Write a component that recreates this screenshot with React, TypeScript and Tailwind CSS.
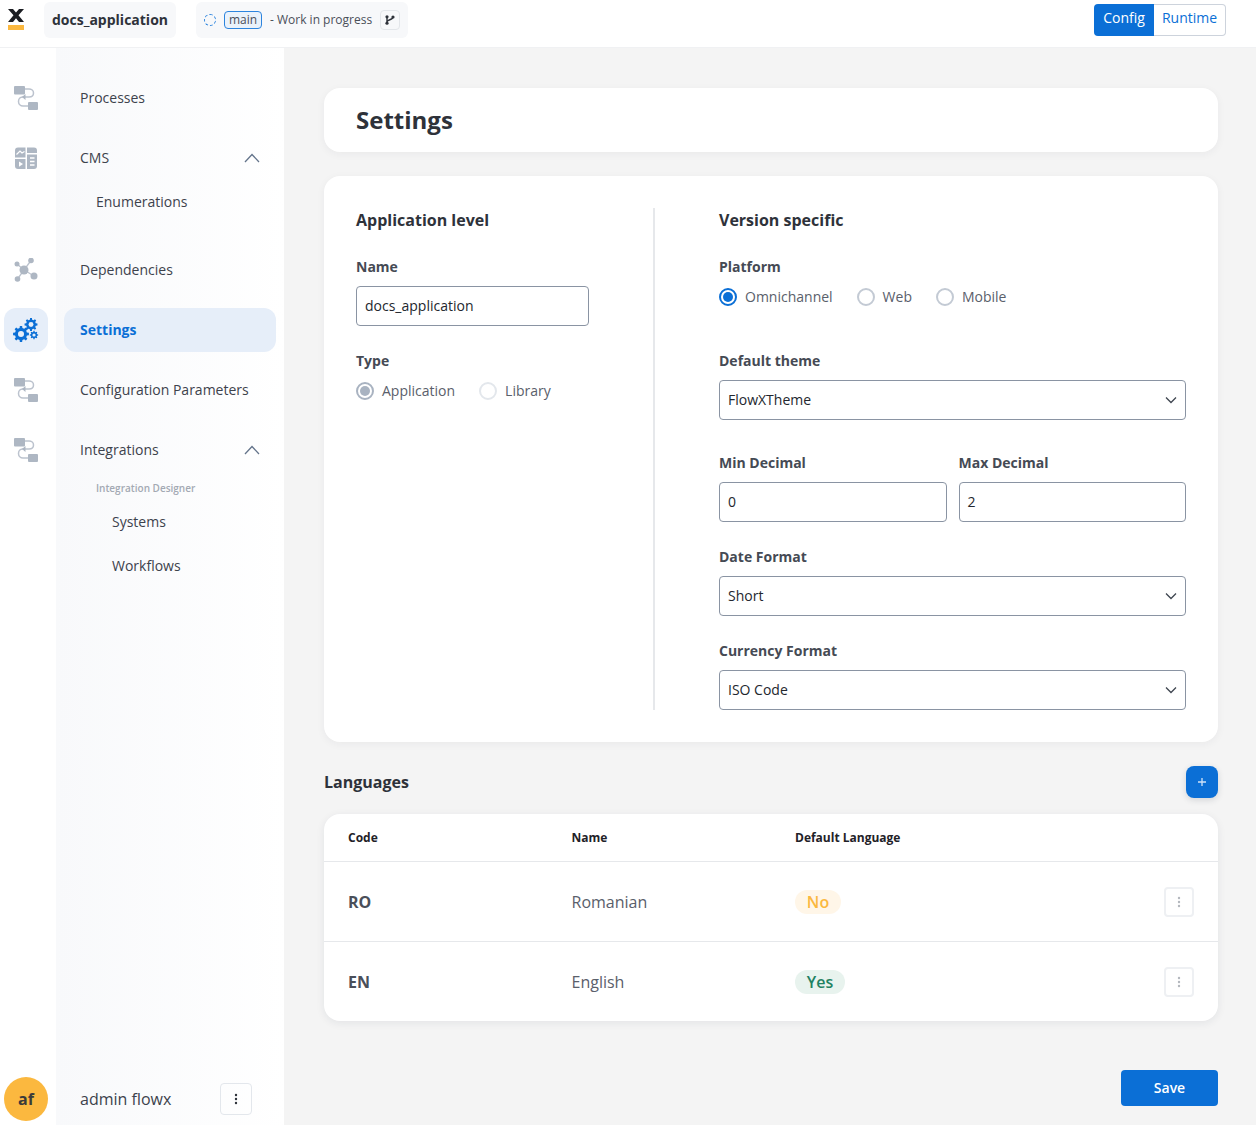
import React from "react";

const FlowIcon = () => (
  <svg width="24" height="24" viewBox="0 0 24 24" fill="none">
    <rect x="0" y="0" width="11" height="8.500" rx="1" fill="#aeb7c3" />
    <rect x="14" y="16" width="10" height="8" rx="1" fill="#aeb7c3" />
    <path d="M11 3H15C17.500 3 19.500 4.800 19.500 7C19.500 9.500 17.500 11 15 11H8.500C6.200 11 4.500 13 4.500 15.500C4.500 18 6.500 20 9 20H14" stroke="#bcc3ce" strokeWidth="1.500" />
    <path d="M8 11L11.500 8V14Z" fill="#aeb7c3" />
  </svg>
);

const CmsIcon = () => (
  <svg width="22" height="22" viewBox="0 0 22 22" fill="none">
    <path d="M0 3.500a3 3 0 0 1 3-3H10.500V10.500H0Z" fill="#aeb7c3" />
    <path d="M12 .5H19A3 3 0 0 1 22 3.500V6H12Z" fill="#aeb7c3" />
    <path d="M0 12H10.500V22H3A3 3 0 0 1 0 19Z" fill="#aeb7c3" />
    <path d="M12 7.500H22V19A3 3 0 0 1 19 22H12Z" fill="#aeb7c3" />
    <path d="M1.500 7.500L5 4L7 6L9.500 4.500" stroke="#fff" strokeWidth="1.200" />
    <path d="M4 14.500L8 17L4 19.800Z" fill="#fff" />
    <path d="M15 11H19.500M15 14.500H19.500M15 18H19.500" stroke="#fff" strokeWidth="1.500" />
  </svg>
);

const DepIcon = () => (
  <svg width="24" height="24" viewBox="0 0 24 24" fill="none">
    <path d="M3 6L10 12M17 2.500L10 12M20 18L10 12M3.500 21L10 12" stroke="#bcc3ce" strokeWidth="1.300" />
    <circle cx="10" cy="12" r="4.500" fill="#aeb7c3" />
    <circle cx="3" cy="6" r="2.500" fill="#aeb7c3" />
    <circle cx="17" cy="2.500" r="2.800" fill="#aeb7c3" />
    <circle cx="20" cy="18" r="3.500" fill="#aeb7c3" />
    <circle cx="3.500" cy="21" r="2.800" fill="#aeb7c3" />
  </svg>
);

function gearPath(cx: number, cy: number, r: number) {
  const teeth = 8;
  const inner = r * 0.76;
  const pts: string[] = [];
  for (let i = 0; i < teeth; i++) {
    const a = (i / teeth) * Math.PI * 2;
    const step = (Math.PI * 2) / teeth;
    [[-0.3, inner], [-0.18, r], [0.18, r], [0.3, inner]].forEach(([f, rad]) => {
      const t = a + f * step;
      pts.push(`${(cx + Math.cos(t) * rad).toFixed(2)} ${(cy + Math.sin(t) * rad).toFixed(2)}`);
    });
  }
  return `M${pts.join("L")}Z`;
}

const Gear = ({ cx, cy, r }: { cx: number; cy: number; r: number }) => (
  <g>
    <path d={gearPath(cx, cy, r)} fill="#0b6fd6" />
    <circle cx={cx} cy={cy} r={r * 0.38} fill="#e6eef9" />
  </g>
);

const GearsIcon = () => (
  <svg width="26" height="24" viewBox="0 0 26 24" fill="none">
    <Gear cx={8} cy={16} r={8} />
    <Gear cx={18} cy={6.500} r={6.500} />
    <Gear cx={21} cy={17} r={4.200} />
  </svg>
);

const Chevron = () => (
  <svg width="16" height="10" viewBox="0 0 16 10" fill="none">
    <path d="M1 9L8 1.500L15 9" stroke="#64748b" strokeWidth="1.300" />
  </svg>
);

const Down = () => (
  <svg width="12" height="8" viewBox="0 0 12 8" fill="none">
    <path d="M1 1.500L6 6.500L11 1.500" stroke="#3f4650" strokeWidth="1.300" />
  </svg>
);

const Kebab = ({ color }: { color: string }) => (
  <svg width="4" height="12" viewBox="0 0 4 12">
    <circle cx="2" cy="2" r="1.200" fill={color} />
    <circle cx="2" cy="6" r="1.200" fill={color} />
    <circle cx="2" cy="10" r="1.200" fill={color} />
  </svg>
);

const Rail = ({ active, children, className = "" }: { active?: boolean; children: React.ReactNode; className?: string }) => (
  <div className={`w-11 h-11 rounded-xl flex items-center justify-center ${active ? "bg-[#e6eef9]" : ""} ${className}`}>{children}</div>
);

const NavItem = ({ label, indent = "pl-4", chevron, active, className = "" }: { label: string; indent?: string; chevron?: boolean; active?: boolean; className?: string }) => (
  <div className={`h-11 rounded-xl flex items-center justify-between pr-4 text-sm ${indent} ${active ? "bg-[#e6eef9] text-[#0b6fd6] font-bold" : "text-[#3d424c]"} ${className}`}>
    <span>{label}</span>
    {chevron && <Chevron />}
  </div>
);

const Label = ({ children }: { children: React.ReactNode }) => (
  <div className="h-5 leading-5 mb-[9px] text-sm font-bold text-[#454a54]">{children}</div>
);

const Input = ({ value, className = "" }: { value: string; className?: string }) => (
  <div className={`h-10 border border-[#8a94a3] rounded flex items-center px-2 text-sm text-[#23272e] ${className}`}>{value}</div>
);

const Select = ({ value }: { value: string }) => (
  <div className="h-10 border border-[#8a94a3] rounded flex items-center justify-between pl-2 pr-2 text-sm text-[#23272e]">
    <span>{value}</span>
    <Down />
  </div>
);

const Radio = ({ label, state }: { label: string; state: "on" | "off" | "disabledOn" | "disabledOff" }) => {
  const ring = state === "on" ? "border-[#0b6fd6]" : state === "disabledOn" ? "border-[#a9b3c1]" : state === "off" ? "border-[#c3cad4]" : "border-[#e3e7ec]";
  const dot = state === "on" ? "bg-[#0b6fd6]" : state === "disabledOn" ? "bg-[#a9b3c1]" : "";
  return (
    <div className="flex items-center gap-[8px] text-sm text-[#5a606b]">
      <span className={`w-[18px] h-[18px] rounded-full border-2 flex items-center justify-center ${ring}`}>
        {dot && <span className={`w-[10px] h-[10px] rounded-full ${dot}`} />}
      </span>
      <span>{label}</span>
    </div>
  );
};

const Row = ({ code, name, pill, last }: { code: string; name: string; pill: React.ReactNode; last?: boolean }) => (
  <div className={`flex items-center pl-6 pr-6 ${last ? "h-[79px] pt-px" : "h-20 border-b border-[#e6e8eb]"}`}>
    <div className="w-[223.500px] font-bold text-[#4a4f59]">{code}</div>
    <div className="w-[223.500px] text-[#5a606b]">{name}</div>
    <div className="flex-1">{pill}</div>
    <div className="w-[30px] h-[30px] border-2 border-[#eef0f3] rounded flex items-center justify-center">
      <Kebab color="#b4b8be" />
    </div>
  </div>
);

export default function App() {
  return (
    <div className="h-[1125px] flex flex-col overflow-hidden bg-white text-[#3d424c]" style={{ fontFamily: '"Open Sans", sans-serif' }}>
      <header className="h-12 shrink-0 border-b border-[#f0f1f3] flex items-start pr-[30px] bg-white">
        <div className="w-11 shrink-0 pl-2 pt-[9px]">
          <svg width="16" height="21" viewBox="0 0 16 21">
            <path d="M0 0H5L8 3.500L11 0H16L10.500 6.300L16 13H11L8 9.300L5 13H0L5.500 6.300Z" fill="#1b1d22" />
            <rect x="0" y="16" width="16" height="5" fill="#fbb83f" />
          </svg>
        </div>
        <div className="mt-[2px] h-9 w-[132px] rounded-md bg-[#f7f8fa] flex items-center justify-center text-sm font-bold text-[#2e323a]">docs_application</div>
        <div className="mt-[2px] ml-5 h-9 w-[212px] rounded-md bg-[#f7f8fa] flex items-center pl-2 text-xs text-[#4a4f59]">
          <span className="w-3 h-3 rounded-full border border-dashed border-[#2c84de]" />
          <span className="ml-2 h-[18px] w-[38px] border border-[#2c84de] rounded bg-[#eaf2fb] flex items-center justify-center">main</span>
          <span className="ml-2">- Work in progress</span>
          <span className="ml-2 w-5 h-5 border border-[#e3e6ea] rounded flex items-center justify-center">
            <svg width="10" height="10" viewBox="0 0 10 10" fill="none">
              <circle cx="2" cy="1.800" r="1.600" fill="#2e323a" />
              <circle cx="2" cy="8.200" r="1.600" fill="#2e323a" />
              <circle cx="8" cy="2" r="1.600" fill="#2e323a" />
              <path d="M2 2V8M8 2C8 5 2 4.500 2 7" stroke="#2e323a" strokeWidth="1.400" />
            </svg>
          </span>
        </div>
        <div className="ml-auto mt-1 h-8 flex text-sm rounded">
          <div className="w-[60px] pb-1 bg-[#0b6fd6] text-white flex items-center justify-center rounded-l">Config</div>
          <div className="w-[72px] pb-1 border border-l-0 border-[#cdd3dc] text-[#0b6fd6] flex items-center justify-center rounded-r">Runtime</div>
        </div>
      </header>
      <div className="flex-1 flex min-h-0">
        <aside className="w-14 shrink-0 bg-white flex flex-col items-start pl-1 pt-7 pb-1">
          <Rail><FlowIcon /></Rail>
          <Rail className="mt-4"><CmsIcon /></Rail>
          <Rail className="mt-[68px]"><DepIcon /></Rail>
          <Rail active className="mt-4"><GearsIcon /></Rail>
          <Rail className="mt-4"><FlowIcon /></Rail>
          <Rail className="mt-4"><FlowIcon /></Rail>
          <div className="mt-auto w-11 h-11 rounded-full bg-[#fbb83f] flex items-center justify-center font-bold text-[#3a3a3a]">af</div>
        </aside>
        <nav className="w-[228px] shrink-0 flex flex-col pt-7 pb-[10px] px-2 bg-gradient-to-r from-[#f8f9fb] to-white">
          <NavItem label="Processes" />
          <NavItem label="CMS" chevron className="mt-4" />
          <NavItem label="Enumerations" indent="pl-8" />
          <NavItem label="Dependencies" className="mt-6" />
          <NavItem label="Settings" active className="mt-4" />
          <NavItem label="Configuration Parameters" className="mt-4" />
          <NavItem label="Integrations" chevron className="mt-4" />
          <div className="h-6 mt-1 pl-8 flex items-center text-[10px] font-semibold text-[#a3a9b3]">Integration Designer</div>
          <NavItem label="Systems" indent="pl-12" />
          <NavItem label="Workflows" indent="pl-12" />
          <div className="mt-auto flex items-center justify-between pl-4 pr-6">
            <span className="text-base text-[#3d424c]">admin flowx</span>
            <span className="w-8 h-8 border border-[#e3e7ec] rounded flex items-center justify-center">
              <Kebab color="#2e323a" />
            </span>
          </div>
        </nav>
        <main className="flex-1 bg-[#f4f4f4] pl-10 pr-[38px] pt-10 min-w-0 flex flex-col">
          <div className="h-16 bg-white rounded-2xl shadow-[0_2px_8px_rgba(30,40,60,0.05)] flex items-center pl-8 text-2xl font-bold text-[#2e323a]">Settings</div>
          <div className="mt-6 h-[566px] bg-white rounded-2xl shadow-[0_2px_8px_rgba(30,40,60,0.05)] p-8 flex">
            <div className="w-[299px] border-r-2 border-[#e6e8eb] pr-16">
              <div className="h-6 leading-6 font-bold text-[#2e323a] mb-[25px]">Application level</div>
              <Label>Name</Label>
              <Input value="docs_application" />
              <div className="mt-[25px]"><Label>Type</Label></div>
              <div className="flex gap-6 pt-px">
                <Radio label="Application" state="disabledOn" />
                <Radio label="Library" state="disabledOff" />
              </div>
            </div>
            <div className="flex-1 pl-16 min-w-0">
              <div className="h-6 leading-6 font-bold text-[#2e323a] mb-[25px]">Version specific</div>
              <Label>Platform</Label>
              <div className="flex gap-6 h-10 items-start pt-px">
                <Radio label="Omnichannel" state="on" />
                <Radio label="Web" state="off" />
                <Radio label="Mobile" state="off" />
              </div>
              <div className="mt-[25px]"><Label>Default theme</Label></div>
              <Select value="FlowXTheme" />
              <div className="mt-[33px] flex gap-3">
                <div className="flex-1"><Label>Min Decimal</Label><Input value="0" /></div>
                <div className="flex-1"><Label>Max Decimal</Label><Input value="2" /></div>
              </div>
              <div className="mt-[25px]"><Label>Date Format</Label></div>
              <Select value="Short" />
              <div className="mt-[25px]"><Label>Currency Format</Label></div>
              <Select value="ISO Code" />
            </div>
          </div>
          <div className="mt-6 h-8 flex items-center justify-between">
            <span className="font-bold text-[#2e323a]">Languages</span>
            <span className="w-8 h-8 rounded-lg bg-[#0b6fd6] flex items-center justify-center shadow-[0_2px_6px_rgba(30,40,60,0.15)]">
              <svg width="10" height="10" viewBox="0 0 10 10"><path d="M5 1V9M1 5H9" stroke="#cfe2f8" strokeWidth="1.300" /></svg>
            </span>
          </div>
          <div className="mt-4 bg-white rounded-2xl shadow-[0_2px_8px_rgba(30,40,60,0.08)]">
            <div className="h-12 flex items-center pl-6 border-b border-[#e6e8eb] text-xs font-bold text-[#1f2228]">
              <div className="w-[223.500px]">Code</div>
              <div className="w-[223.500px]">Name</div>
              <div>Default Language</div>
            </div>
            <Row code="RO" name="Romanian" pill={<span className="inline-flex h-6 w-[46px] items-center justify-center rounded-full bg-[#fff6e8] text-[#fbb83f] font-semibold">No</span>} />
            <Row code="EN" name="English" last pill={<span className="inline-flex h-6 w-[50px] items-center justify-center rounded-full bg-[#e8f3ee] text-[#1f8262] font-semibold">Yes</span>} />
          </div>
          <div className="mt-[49px] self-end w-[97px] h-9 rounded bg-[#0b6fd6] text-white text-sm font-semibold flex items-center justify-center">Save</div>
        </main>
      </div>
    </div>
  );
}
